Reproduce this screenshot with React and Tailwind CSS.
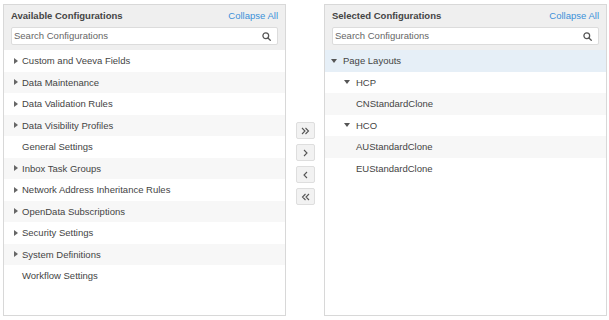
import React from 'react';

const available = [
  { name: 'Custom and Veeva Fields', arrow: true },
  { name: 'Data Maintenance', arrow: true },
  { name: 'Data Validation Rules', arrow: true },
  { name: 'Data Visibility Profiles', arrow: true },
  { name: 'General Settings', arrow: false },
  { name: 'Inbox Task Groups', arrow: true },
  { name: 'Network Address Inheritance Rules', arrow: true },
  { name: 'OpenData Subscriptions', arrow: true },
  { name: 'Security Settings', arrow: true },
  { name: 'System Definitions', arrow: true },
  { name: 'Workflow Settings', arrow: false },
];

const selected = [
  { name: 'Page Layouts', level: 0, open: true },
  { name: 'HCP', level: 1, open: true },
  { name: 'CNStandardClone', level: 2 },
  { name: 'HCO', level: 1, open: true },
  { name: 'AUStandardClone', level: 2 },
  { name: 'EUStandardClone', level: 2 },
];

function Caret({ open }) {
  return open ? (
    <svg width="6" height="4" viewBox="0 0 6 4" className="shrink-0">
      <path d="M0 0 H6 L3 4 Z" fill="#555" />
    </svg>
  ) : (
    <svg width="4" height="6" viewBox="0 0 4 6" className="shrink-0">
      <path d="M0 0 L4 3 L0 6 Z" fill="#666" />
    </svg>
  );
}

function SearchIcon() {
  return (
    <svg width="9" height="9" viewBox="0 0 10 10" fill="none" stroke="#555" strokeWidth="1.4">
      <circle cx="4.2" cy="4.2" r="3.2" />
      <path d="M6.6 6.6 L9.2 9.2" strokeLinecap="round" />
    </svg>
  );
}

function Header({ title }) {
  return (
    <div className="bg-[#efefef] h-[45px] px-[7px] pt-[4px]">
      <div className="flex justify-between items-center h-[14px]">
        <span className="font-bold text-[#444]">{title}</span>
        <span className="text-[#3b8fd9]">Collapse All</span>
      </div>
      <div className="mt-[4px] h-[18px] bg-white border border-[#dcdcdc] rounded-[2px] flex items-center justify-between pl-[2px] pr-[6px]">
        <span className="text-[#666]">Search Configurations</span>
        <SearchIcon />
      </div>
    </div>
  );
}

function MoveButton({ children }) {
  return (
    <div className="w-[19px] h-[17px] bg-[#f2f2f2] border border-[#dedede] rounded-[2px] flex items-center justify-center">
      {children}
    </div>
  );
}

export default function App() {
  return (
    <div
      className="w-[609px] h-[320px] bg-white flex pl-[3px] pt-[4px] text-[9.5px] leading-none"
      style={{ fontFamily: '"Liberation Sans", Arial, sans-serif' }}
    >
      <div className="w-[283px] h-[312px] border border-[#d8d8d8] flex flex-col">
        <Header title="Available Configurations" />
        {available.map((item, i) => (
          <div
            key={item.name}
            className={`h-[21.5px] flex items-center text-[#444] ${i % 2 === 1 ? 'bg-[#f7f7f7]' : 'bg-white'}`}
          >
            <div className="w-[18px] flex justify-end pr-[4px]">{item.arrow && <Caret />}</div>
            <span>{item.name}</span>
          </div>
        ))}
      </div>

      <div className="w-[38px] flex flex-col items-center gap-[5px] pt-[118px]">
        <MoveButton>
          <svg width="9" height="8" viewBox="0 0 9 8" fill="none" stroke="#555" strokeWidth="1.1">
            <path d="M1 1 L4 4 L1 7 M4.5 1 L7.5 4 L4.5 7" />
          </svg>
        </MoveButton>
        <MoveButton>
          <svg width="5" height="8" viewBox="0 0 5 8" fill="none" stroke="#555" strokeWidth="1.1">
            <path d="M1 1 L4 4 L1 7" />
          </svg>
        </MoveButton>
        <MoveButton>
          <svg width="5" height="8" viewBox="0 0 5 8" fill="none" stroke="#555" strokeWidth="1.1">
            <path d="M4 1 L1 4 L4 7" />
          </svg>
        </MoveButton>
        <MoveButton>
          <svg width="9" height="8" viewBox="0 0 9 8" fill="none" stroke="#555" strokeWidth="1.1">
            <path d="M4.5 1 L1.5 4 L4.5 7 M8 1 L5 4 L8 7" />
          </svg>
        </MoveButton>
      </div>

      <div className="w-[283px] h-[312px] border border-[#d8d8d8] flex flex-col">
        <Header title="Selected Configurations" />
        {selected.map((item, i) => {
          const bg = i === 0 ? 'bg-[#e6eff7]' : i % 2 === 0 ? 'bg-[#f7f7f7]' : 'bg-white';
          const pad = item.level === 0 ? 'pl-[6px]' : item.level === 1 ? 'pl-[19px]' : 'pl-[31px]';
          return (
            <div key={item.name} className={`h-[21.5px] flex items-center text-[#444] ${bg} ${pad}`}>
              {item.open && (
                <div className="w-[12px] flex items-center">
                  <Caret open />
                </div>
              )}
              <span>{item.name}</span>
            </div>
          );
        })}
      </div>
    </div>
  );
}
